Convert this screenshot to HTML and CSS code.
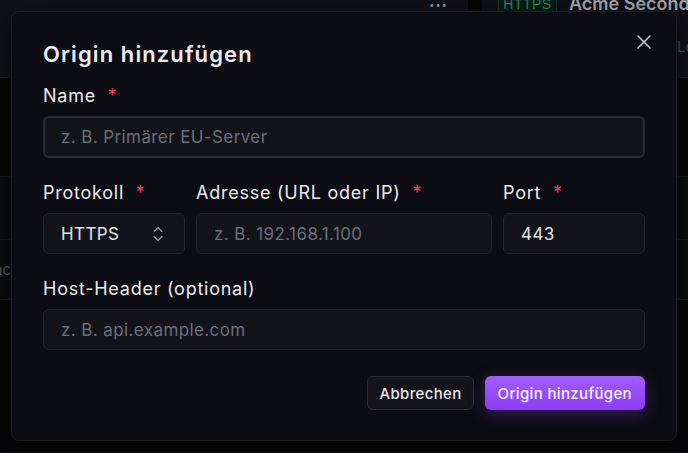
FILE: index.html
```html
<!DOCTYPE html>
<html lang="de">
<head>
<meta charset="utf-8">
<title>Origin hinzufügen</title>
<link rel="stylesheet" href="styles.css">
</head>
<body>
<div class="page">
  <div class="bg-row bg-top">
    <span class="dots">•••</span>
    <span class="gap-block"></span>
    <span class="badge">HTTPS</span>
    <span class="site-name">Acme Secondary</span>
  </div>
  <div class="bg-row bg-dark"></div>
  <div class="bg-row bg-mid"></div>
  <div class="bg-row bg-mid2"><span class="bg-text">ac</span></div>
  <div class="bg-row bg-dark"></div>
  <span class="bg-side-text">Le</span>
</div>

<div class="modal" role="dialog" aria-labelledby="dlg-title">
  <button class="close" aria-label="Schließen">
    <svg width="14" height="14" viewBox="0 0 14 14" fill="none" stroke="currentColor" stroke-width="1.5" stroke-linecap="round"><path d="M1 1l12 12M13 1L1 13"/></svg>
  </button>
  <h2 id="dlg-title" class="title">Origin hinzufügen</h2>

  <div class="field">
    <label class="label">Name <span class="req">*</span></label>
    <div class="input focus"><span class="ph">z. B. Primärer EU-Server</span></div>
  </div>

  <div class="row3">
    <div class="field">
      <label class="label">Protokoll <span class="req">*</span></label>
      <div class="input select"><span class="val">HTTPS</span>
        <svg width="10" height="16" viewBox="0 0 10 16" fill="none" stroke="currentColor" stroke-width="1.2" stroke-linecap="round" stroke-linejoin="round"><path d="M1 5.5l4-4 4 4M1 10.5l4 4 4-4"/></svg>
      </div>
    </div>
    <div class="field">
      <label class="label">Adresse (URL oder IP) <span class="req">*</span></label>
      <div class="input"><span class="ph">z. B. 192.168.1.100</span></div>
    </div>
    <div class="field">
      <label class="label">Port <span class="req">*</span></label>
      <div class="input"><span class="val">443</span></div>
    </div>
  </div>

  <div class="field">
    <label class="label">Host-Header (optional)</label>
    <div class="input"><span class="ph">z. B. api.example.com</span></div>
  </div>

  <div class="actions">
    <button class="btn btn-secondary">Abbrechen</button>
    <button class="btn btn-primary">Origin hinzufügen</button>
  </div>
</div>
</body>
</html>
```
FILE: styles.css
```css
* { box-sizing: border-box; }
html, body { margin: 0; padding: 0; }
body {
  width: 688px;
  height: 453px;
  overflow: hidden;
  background: #060608;
  font-family: Inter, "Noto Sans", sans-serif;
  position: relative;
}
.page {
  display: flex;
  flex-direction: column;
  height: 100%;
}
.bg-row { width: 100%; }
.bg-top {
  height: 78px;
  background: #101116;
  border-bottom: 1px solid #1a1b20;
  position: relative;
}
.dots {
  position: absolute;
  left: 429px;
  top: -2px;
  color: #8a8c93;
  font-size: 10px;
  letter-spacing: 0.5px;
}
.gap-block {
  position: absolute;
  left: 468px;
  top: 0;
  width: 14px;
  height: 11px;
  background: #050506;
}
.badge {
  position: absolute;
  left: 498px;
  top: -5px;
  height: 18px;
  width: 59px;
  text-align: center;
  border: 1px solid #17352b;
  background: #0c1a15;
  color: #1f8a64;
  font-family: "Liberation Sans", sans-serif;
  font-size: 14px;
  line-height: 16px;
  letter-spacing: 0.5px;
}
.site-name {
  position: absolute;
  left: 569px;
  top: -7px;
  color: #a4a5ab;
  font-size: 18px;
  font-weight: 600;
  white-space: nowrap;
}
.bg-side-text {
  position: absolute;
  left: 677px;
  top: 37px;
  color: #4a4b50;
  font-size: 15px;
}
.bg-dark { height: 99px; background: #050507; border-bottom: 1px solid #141519; }
.bg-mid { height: 63px; background: #0b0c0f; border-bottom: 1px solid #17181c; }
.bg-mid2 { height: 60px; background: #0b0c0f; border-bottom: 1px solid #17181c; position: relative; }
.bg-text { position: absolute; left: -6px; top: 20px; color: #55565b; font-size: 15px; }
.bg-row.bg-dark:last-of-type { flex: 1; }

.modal {
  position: absolute;
  left: 11px;
  top: 11px;
  width: 666px;
  height: 430px;
  background: #0c0d12;
  border: 1px solid #1c1e24;
  border-radius: 8px;
  padding: 28px 31px 0 31px;
  display: flex;
  flex-direction: column;
  box-shadow: 0 10px 30px rgba(0,0,0,0.5);
}
.close {
  position: absolute;
  right: 20px;
  top: 18px;
  width: 24px;
  height: 24px;
  padding: 0;
  border: 0;
  background: transparent;
  color: #c9cad0;
  display: flex;
  align-items: center;
  justify-content: center;
}
.title {
  margin: 0 0 16px 0;
  font-size: 22px;
  line-height: 28px;
  font-weight: 600;
  color: #ececf0;
  letter-spacing: 1.1px;
}
.field { display: flex; flex-direction: column; gap: 8px; }
.label {
  font-size: 18px;
  line-height: 24px;
  font-weight: 400;
  color: #ececf0;
  letter-spacing: 0.75px;
}
.req { color: #f43f5e; margin-left: 6px; }
.input {
  height: 41px;
  border: 1px solid #23252d;
  background: #12141a;
  border-radius: 6px;
  display: flex;
  align-items: center;
  padding: 0 17px;
  font-size: 17px;
  letter-spacing: 0.4px;
}
.input.focus { height: 42px; border: 2px solid #2a2c34; padding: 0 16px; }
.ph { color: #6c6f7a; }
.val { color: #e4e4e8; }
.select { justify-content: space-between; padding-right: 21px; }
.select svg { color: #9a9ca4; }
.row3 {
  display: grid;
  grid-template-columns: 142px 1fr 142px;
  gap: 11px;
  margin: 23px 0 23px;
}
.actions {
  display: flex;
  justify-content: flex-end;
  gap: 11px;
  margin-top: 26px;
}
.btn {
  height: 34px;
  border-radius: 6px;
  font-family: Inter, "Noto Sans", sans-serif;
  font-size: 15px;
  font-weight: 500;
  letter-spacing: 0.35px;
  padding: 0 11px;
  cursor: pointer;
}
.btn-secondary {
  background: #14151b;
  border: 1px solid #2c2e36;
  color: #e6e6ea;
}
.btn-primary {
  background: linear-gradient(180deg, #a15ef9 0%, #8b3cf5 100%);
  border: 0;
  color: #f7f2ff;
  padding: 0 13px;
  box-shadow: 0 4px 16px rgba(139, 60, 245, 0.35);
}
```
